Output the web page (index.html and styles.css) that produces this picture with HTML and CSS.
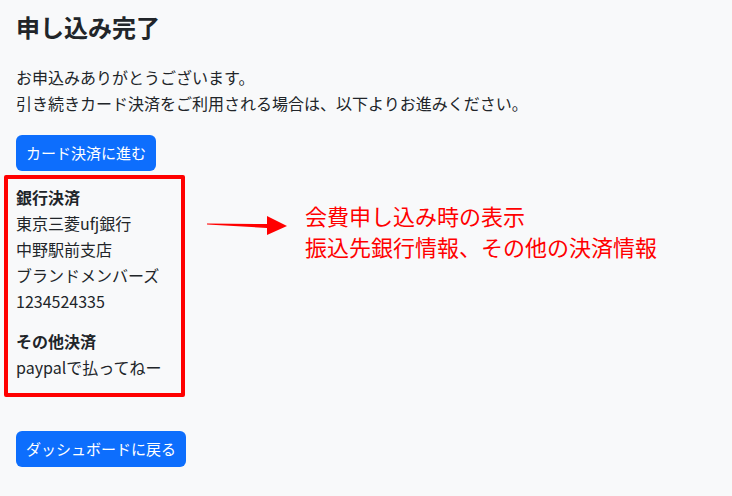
FILE: index.html
```html
<!DOCTYPE html>
<html lang="ja">
<head>
    <meta charset="UTF-8">
    <meta name="viewport" content="width=device-width, initial-scale=1.0">
    <title>申し込み完了</title>
    <link rel="stylesheet" href="styles.css">
</head>
<body>

<div class="container">
    <h1>申し込み完了</h1>

    <p class="message">お申込みありがとうございます。<br>引き続きカード決済をご利用される場合は、以下よりお進みください。</p>

    <a class="btn" href="#">カード決済に進む</a>

    <div class="payment-row">
        <div class="payment-box">
            <div class="payment-title">銀行決済</div>
            <div>東京三菱ufj銀行</div>
            <div>中野駅前支店</div>
            <div>ブランドメンバーズ</div>
            <div>1234524335</div>

            <div class="payment-title other">その他決済</div>
            <div>paypalで払ってねー</div>
        </div>

        <div class="note">
            <svg class="arrow" width="82" height="22" viewBox="0 0 82 22">
                <polygon points="0,8.5 60,9 60,1 80,11 60,20 60,13 0,9.5" fill="#ff0000"/>
            </svg>
            <p class="note-text">会費申し込み時の表示<br>振込先銀行情報、その他の決済情報</p>
        </div>
    </div>

    <a class="btn back" href="#">ダッシュボードに戻る</a>
</div>

</body>
</html>
```

FILE: styles.css
```css
body {
    margin: 0;
    background-color: #f8f9fa;
    color: #212529;
    font-family: "Noto Sans CJK JP", "Noto Sans", sans-serif;
    font-size: 16px;
    line-height: 26px;
}

.container {
    padding: 12px 16px;
}

h1 {
    margin: 0;
    font-size: 24px;
    line-height: 29px;
    font-weight: bold;
}

.message {
    margin: 23px 0 19px;
}

.btn {
    display: inline-block;
    height: 36px;
    line-height: 36px;
    padding: 0 10px;
    background-color: #0d6efd;
    color: #fff;
    font-size: 15px;
    border-radius: 6px;
    text-decoration: none;
}

.payment-row {
    display: flex;
    align-items: flex-start;
    margin: 4px 0 34px -12px;
}

.payment-box {
    box-sizing: border-box;
    width: 181px;
    padding: 5px 8px 13px;
    border: 4px solid #ff0000;
    border-radius: 2px;
}

.payment-title {
    font-weight: bold;
}

.payment-title.other {
    margin-top: 14px;
}

.note {
    display: flex;
    align-items: flex-start;
}

.arrow {
    margin: 40px 0 0 22px;
}

.note-text {
    margin: 25px 0 0 16px;
    color: #ff0000;
    font-size: 22px;
    line-height: 31px;
}
```
